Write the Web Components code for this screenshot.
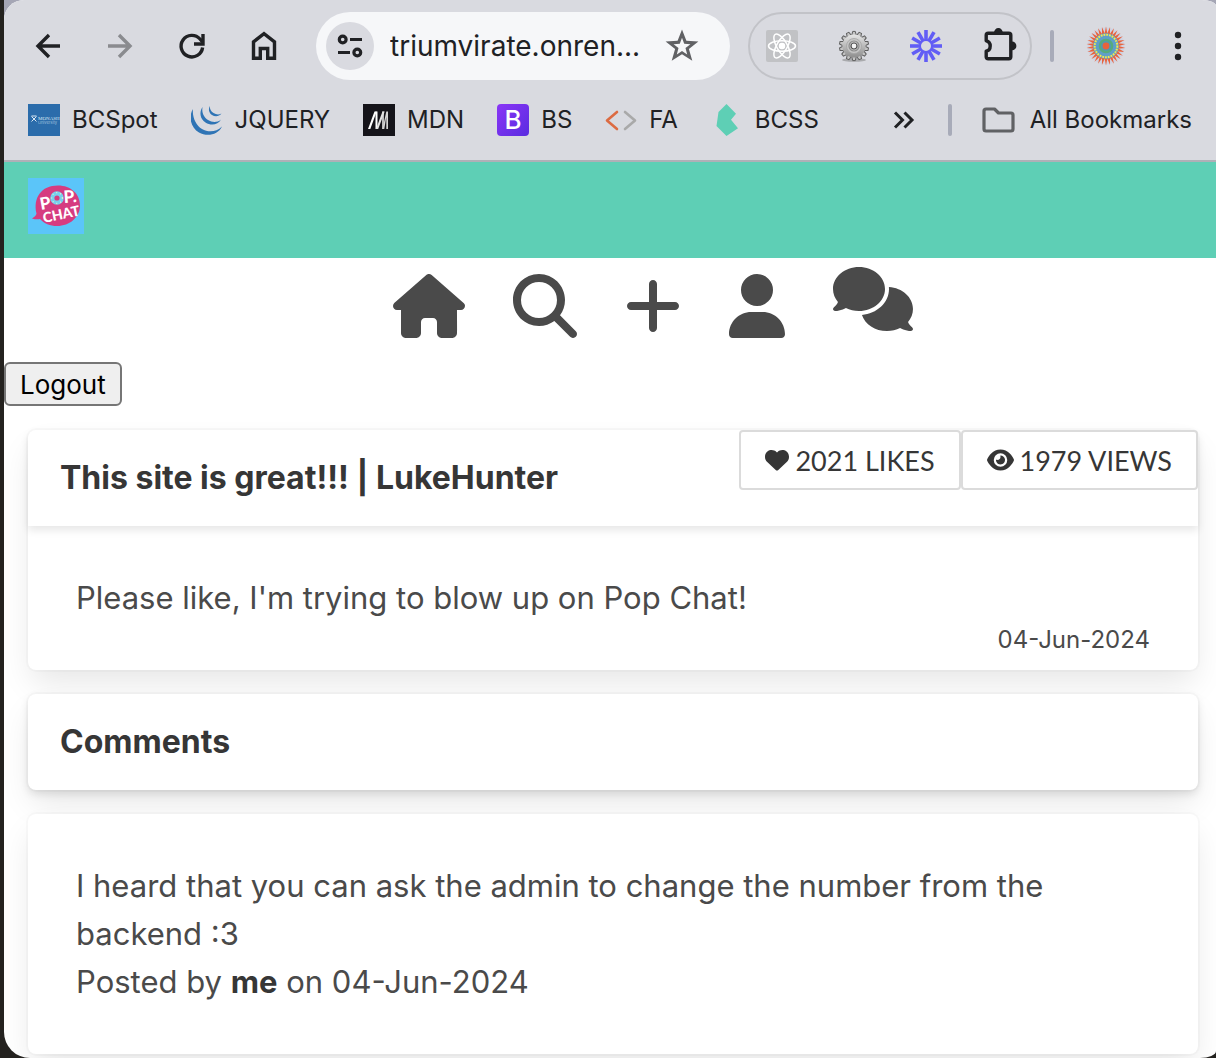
<!DOCTYPE html>
<html lang="en">
<head>
<meta charset="utf-8">
<title>Pop Chat</title>
<style>
  html, body { margin: 0; }
  body {
    background: linear-gradient(#a5a6b5 0 50%, #24221f 50%);
    font-family: Inter, "Liberation Sans", sans-serif;
    color: #4a4a4a;
    border-left: 4px solid #24221f;
    box-sizing: border-box;
    min-height: 100vh;
  }
</style>
</head>
<body>
<browser-window>
  <browser-toolbar slot="chrome"></browser-toolbar>
  <bookmark-bar slot="chrome"></bookmark-bar>
  <site-header></site-header>
  <site-nav></site-nav>
  <logout-button>Logout</logout-button>
  <card-list>
    <post-card likes="2021" views="1979">
      <span slot="title">This site is great!!! | LukeHunter</span>
      Please like, I'm trying to blow up on Pop Chat!
      <span slot="date">04-Jun-2024</span>
    </post-card>
    <heading-card>Comments</heading-card>
    <comment-card>
      I heard that you can ask the admin to change the number from the backend :3
      <span slot="author">me</span>
      <span slot="date">04-Jun-2024</span>
    </comment-card>
  </card-list>
</browser-window>

<script>
const define = (name, markup) => customElements.define(name, class extends HTMLElement {
  constructor() {
    super();
    const html = typeof markup === 'function' ? markup(this) : markup;
    this.attachShadow({ mode: 'open' }).innerHTML =
      '<style>*,:host{box-sizing:border-box}:host{display:block}svg{display:block;flex:none}button{font:inherit;color:inherit;cursor:pointer}</style>' + html;
  }
});

/* Solid glyphs shared by the navigation and the post statistics */
const GLYPHS = {
  home: [576, 'M575.8 255.5c0 18-15 32.1-32 32.1h-32l.7 160.2c0 2.7-.2 5.4-.5 8.1V472c0 22.1-17.9 40-40 40H456c-1.1 0-2.2 0-3.3-.1c-1.4 .1-2.8 .1-4.2 .1H416 392c-22.1 0-40-17.9-40-40V448 384c0-17.7-14.3-32-32-32H256c-17.7 0-32 14.3-32 32v64 24c0 22.1-17.9 40-40 40H160 128.1c-1.5 0-3-.1-4.5-.2c-1.2 .1-2.4 .2-3.6 .2H104c-22.1 0-40-17.9-40-40V360c0-.9 0-1.9 .1-2.8V287.6H32c-18 0-32-14-32-32.1c0-9 3-17 10-24L266.4 8c7-7 15-8 22-8s15 2 21 7L564.8 231.5c8 7 12 15 11 24z'],
  search: [512, 'M416 208c0 45.9-14.9 88.3-40 122.7L502.6 457.4c12.5 12.5 12.5 32.8 0 45.3s-32.8 12.5-45.3 0L330.7 376c-34.4 25.2-76.8 40-122.7 40C93.1 416 0 322.9 0 208S93.1 0 208 0S416 93.1 416 208zM208 352a144 144 0 1 0 0-288 144 144 0 1 0 0 288z'],
  plus: [448, 'M256 80c0-17.7-14.3-32-32-32s-32 14.3-32 32V224H48c-17.7 0-32 14.3-32 32s14.3 32 32 32H192V432c0 17.7 14.3 32 32 32s32-14.3 32-32V288H400c17.7 0 32-14.3 32-32s-14.3-32-32-32H256V80z'],
  user: [448, 'M224 256A128 128 0 1 0 224 0a128 128 0 1 0 0 256zm-45.7 48C79.8 304 0 383.8 0 482.3C0 498.7 13.3 512 29.7 512H418.3c16.4 0 29.7-13.3 29.7-29.7C448 383.8 368.2 304 269.7 304H178.3z'],
  comments: [640, 'M208 352c114.9 0 208-78.8 208-176S322.9 0 208 0S0 78.8 0 176c0 38.6 14.7 74.3 39.6 103.4c-3.5 9.4-8.7 17.7-14.2 24.7c-4.8 6.2-9.7 11-13.3 14.3c-1.8 1.6-3.3 2.9-4.3 3.7c-.5 .4-.9 .7-1.1 .8l-.2 .2C1 327.2-1.4 334.4 .8 340.9S9.1 352 16 352c21.8 0 43.8-5.6 62.1-12.5c9.2-3.5 17.8-7.4 25.2-11.4C134.1 343.3 169.8 352 208 352zM448 176c0 112.3-99.1 196.9-216.5 207C255.8 457.4 336.4 512 432 512c38.2 0 73.9-8.7 104.7-23.9c7.5 4 16 7.9 25.2 11.4c18.3 6.9 40.3 12.5 62.1 12.5c6.9 0 13.1-4.5 15.2-11.1c2.1-6.6-.2-13.8-5.8-17.9l-.2-.2c-.2-.2-.6-.4-1.1-.8c-1-.8-2.5-2-4.3-3.7c-3.6-3.3-8.5-8.1-13.3-14.3c-5.5-7-10.7-15.4-14.2-24.7c24.9-29 39.6-64.7 39.6-103.4c0-92.8-84.9-168.9-192.6-175.5c.4 5.1 .6 10.3 .6 15.5z'],
  heart: [512, 'M47.6 300.4L228.3 469.1c7.5 7 17.4 10.9 27.7 10.9s20.2-3.9 27.7-10.9L464.4 300.4c30.4-28.3 47.6-68 47.6-109.5v-5.8c0-69.9-50.5-129.5-119.4-141C347 36.5 300.6 51.4 268 84L256 96 244 84c-32.6-32.6-79-47.5-124.6-39.9C50.5 55.6 0 115.2 0 185.1v5.8c0 41.5 17.2 81.2 47.6 109.5z'],
  eye: [576, 'M288 32c-80.8 0-145.5 36.8-192.6 80.6C48.6 156 17.3 208 2.5 243.7c-3.3 7.9-3.3 16.7 0 24.6C17.3 304 48.6 356 95.4 399.4C142.5 443.2 207.2 480 288 480s145.5-36.8 192.6-80.6c46.8-43.5 78.1-95.4 93-131.1c3.3-7.9 3.3-16.7 0-24.6c-14.9-35.7-46.2-87.7-93-131.1C433.5 68.8 368.8 32 288 32zM144 256a144 144 0 1 1 288 0 144 144 0 1 1 -288 0zm144-64c0 35.3-28.7 64-64 64c-7.1 0-13.9-1.2-20.3-3.3c-5.5-1.8-11.9 1.6-11.7 7.4c.3 6.9 1.3 13.8 3.2 20.7c13.7 51.2 66.4 81.6 117.6 67.9s81.6-66.4 67.9-117.6c-11.1-41.5-47.8-69.4-88.6-71.1c-5.8-.2-9.2 6.1-7.4 11.7c2.1 6.4 3.3 13.2 3.3 20.3z']
};
define('solid-icon', el => {
  const [w, d] = GLYPHS[el.getAttribute('name')];
  return `<style>svg{height:var(--icon-size,64px);width:auto;fill:currentColor}</style><svg viewBox="0 0 ${w} 512" aria-hidden="true"><path d="${d}"/></svg>`;
});

define('browser-window', `
<style>
  :host{background:#fff;min-height:100vh;overflow:hidden;border-radius:20px 14px 16px 26px / 20px 6px 7px 26px}
  .chrome{background:#d9dae0;border-bottom:2px solid #b0b0b7;color:#202124}
</style>
<div class="chrome"><slot name="chrome"></slot></div>
<main><slot></slot></main>`);

const rays = (n, shape) => Array.from({ length: n }, (_, i) => `<g transform="rotate(${i * 360 / n})">${shape}</g>`).join('');

define('browser-toolbar', `
<style>
  :host{display:flex;align-items:center;padding:12px 34px 0 8px}
  button{border:0;background:none;padding:0;display:grid;place-items:center;height:48px}
  .nav{display:flex;margin-right:16px}
  .nav button{width:72px}
  .url{flex:1;min-width:0;height:68px;border-radius:34px;background:#f6f7f9;display:flex;align-items:center;padding:0 30px 0 10px}
  .site{width:48px;border-radius:50%;background:#d9dae0;flex:none}
  input{flex:1;min-width:0;border:0;background:none;outline:0;font:28px Inter,"Liberation Sans",sans-serif;color:#202124;padding:0;margin:0 12px 0 16px;height:48px}
  .ext{display:flex;gap:40px;height:68px;align-items:center;border:2px solid #c2c3c8;border-radius:34px;padding:0 16px;margin:0 18px}
  .ext button{width:32px}
  .sep{width:4px;height:32px;border-radius:2px;background:#a8abb9}
  .avatar{width:40px;margin:0 48px 0 32px}
  .more{width:8px}
</style>
<div class="nav">
  <button aria-label="Back"><svg width="32" height="32" fill="none" stroke="#202124" stroke-width="3.4"><path d="M28 16H6M17 5 6 16l11 11"/></svg></button>
  <button aria-label="Forward"><svg width="32" height="32" fill="none" stroke="#8a8b8f" stroke-width="3.4"><path d="M4 16h22M15 5l11 11-11 11"/></svg></button>
  <button aria-label="Reload"><svg width="32" height="32" fill="none" stroke="#202124" stroke-width="3.4"><path d="M26.6 17.5A10.800 10.800 0 1 1 24 9l2.500 3"/><path d="M27 4v10H18"/></svg></button>
  <button aria-label="Home"><svg width="32" height="32" fill="none" stroke="#202124" stroke-width="3.400"><path d="M5.500 28.300V11.800L16 3.700l10.500 8.100v16.500h-6.800V18.500h-7.400v9.800z"/></svg></button>
</div>
<div class="url">
  <button class="site" aria-label="Site information"><svg width="28" height="28" fill="none" stroke="#202124" stroke-width="3.200"><circle cx="6.700" cy="7.500" r="3.400"/><path d="M14 7.500h12M2 20.500h12"/><circle cx="21.300" cy="20.500" r="3.400"/></svg></button>
  <input aria-label="Address" value="triumvirate.onren..." readonly>
  <button aria-label="Bookmark this page"><svg width="36" height="36" viewBox="0 0 36 36"><path fill="#606164" fill-rule="evenodd" d="m18 1.500 4.400 11.300 12 .8-9.500 7.400 3.400 11.700L18 26.200 7.700 32.700 11.100 21 1.600 13.600l12-.8zM18 9.800l-2.200 5.900-6.200.5 4.900 3.900-1.700 6.300L18 22.900l5.200 3.500-1.700-6.300 4.900-3.900-6.200-.5z"/></svg></button>
</div>
<div class="ext">
  <button aria-label="React tools"><svg width="32" height="32"><rect width="32" height="32" rx="2" fill="#c1c2c5"/><g transform="translate(16 16)" fill="none" stroke="#fff" stroke-width="1.500"><ellipse rx="13.500" ry="5.200"/><ellipse rx="13.500" ry="5.200" transform="rotate(60)"/><ellipse rx="13.500" ry="5.200" transform="rotate(120)"/><circle r="2.500" fill="#fff"/></g></svg></button>
  <button aria-label="Settings extension"><svg width="32" height="32"><defs><linearGradient id="m" x2="0" y2="1"><stop stop-color="#e6e6e6"/><stop offset="1" stop-color="#8d8d8d"/></linearGradient></defs><ellipse cx="16" cy="30" rx="12" ry="1.800" fill="#a9aaad"/><g transform="translate(16 16)"><g fill="#c4c4c4" stroke="#5f5f5f" stroke-width="1">${rays(14, '<path d="M-2.200-11-1.300-14.600h2.600L2.200-11"/>')}</g><circle r="11.600" fill="url(#m)"/><circle r="7.500" fill="#c6c6c6" stroke="#a5a5a5" stroke-width=".8"/><circle r="5" fill="none" stroke="#8d8d8d" stroke-width="1.200"/><circle r="3" fill="#f4f4f4" stroke="#505050" stroke-width="1.200"/></g></svg></button>
  <button aria-label="Loom"><svg width="32" height="32"><g transform="translate(16 16)" stroke="#625df5" stroke-width="3.600">${rays(12, '<path d="M0-5V-16"/>')}<circle r="6" fill="#d9dae0" stroke-width="2"/></g></svg></button>
  <button aria-label="Extensions"><svg width="36" height="36" viewBox="0 0 36 36"><path d="M5.200 8.800q0-2 2-2h20.600q2 0 2 2v21.400q0 2-2 2H7.200q-2 0-2-2v-5.500q4-.8 4-5.200t-4-5.200z" fill="none" stroke="#202124" stroke-width="3.400" stroke-linejoin="round" transform="translate(-1 -1.500)"/><path d="M12 4.500a4.400 4.400 0 0 1 8.800 0zM30 13.500a4.400 4.400 0 0 1 0 8.800z" fill="#202124"/></svg></button>
</div>
<div class="sep"></div>
<button class="avatar" aria-label="Profile"><svg width="40" height="40"><g transform="translate(20 20)"><circle r="18.500" fill="#cfd3e2"/><g fill="#e8633c">${rays(30, '<path d="M-1.500-12 0-19.500 1.500-12z"/>')}</g><circle r="12.800" fill="#5f9fc9"/><circle r="11.300" fill="none" stroke="#f2e94e" stroke-width="2" stroke-dasharray="1.800 1"/><circle r="6.200" fill="#4f9bb0" stroke="#57ab7c" stroke-width="2.200"/><circle r="3.400" fill="#e8633c"/></g></svg></button>
<button class="more" aria-label="Menu"><svg width="8" height="30" fill="#202124"><circle cx="4" cy="4" r="3.200"/><circle cx="4" cy="15" r="3.200"/><circle cx="4" cy="26" r="3.200"/></svg></button>`);

define('bookmark-link', `
<style>
  a{display:flex;align-items:center;gap:12px;color:inherit;text-decoration:none;font-size:24px;line-height:32px;white-space:nowrap}
</style>
<a href="#"><slot name="icon"></slot><slot></slot></a>`);

define('bookmark-bar', `
<style>
  :host{display:flex;align-items:center;justify-content:space-between;padding:24px}
  .links,.end{display:flex;align-items:center}
  .links{gap:33px}
  .end{gap:30px}
  .end button{border:0;background:none;padding:0}
  .end bookmark-link svg{margin-right:2px}
  .sep{width:4px;height:32px;border-radius:2px;background:#a8abb9}
</style>
<div class="links">
  <bookmark-link><svg slot="icon" width="32" height="32"><rect width="32" height="32" fill="#2b6cab"/><g fill="none" stroke="#dbe8f3" stroke-width="1"><path d="M3.500 12.500l5 5M8.500 12.500l-5 5M3.500 12h5"/></g><text x="10" y="16" font-size="5" font-family="Liberation Serif" fill="#dbe8f3">MONASH</text><text x="10" y="20" font-size="4" fill="#9fc0dd">University</text></svg>BCSpot</bookmark-link>
  <bookmark-link><svg slot="icon" width="32" height="32" viewBox="1 0 32 32" fill="#2f74b5"><path d="M3 5C-2 13 1 24 9 28.500s19 2.500 23-6c-6 6-14 6-20 2.500S2 13 3 5z"/><path d="M12.500 3C9 8 10 15 15.500 18.500S28 21 31 15.500c-4 3.500-9 3-13 .5S11.500 9 12.500 3z"/><path d="M20 2c-2 3-1 7 2 9s7 1.800 9.500-1.500c-3 1.500-5.500 1-8-.5S19.500 5 20 2z"/></svg>JQUERY</bookmark-link>
  <bookmark-link><svg slot="icon" width="32" height="32"><rect width="32" height="32" fill="#15141a"/><g fill="#fff"><path d="M5 25 11.500 7.500h2.200L7.300 25z"/><path d="M12.500 7.500h2V25h-2z"/><path d="M13 25 19.500 7.500h2.200L15.200 25z" fill="#e4e4e4"/><path d="M19.200 7.500h1.600V25h-1.600z" fill="#e4e4e4"/><path d="M19.500 25 23.300 7.500h1.700V25h-1.700V13l-2 12z" fill="#d5d5d5"/></g></svg>MDN</bookmark-link>
  <bookmark-link><svg slot="icon" width="32" height="32"><defs><linearGradient id="b" x2="1" y2="1"><stop stop-color="#8a35f6"/><stop offset="1" stop-color="#5a2ce0"/></linearGradient></defs><rect width="32" height="32" rx="4" fill="url(#b)"/><text x="16" y="25" text-anchor="middle" font-size="26" font-weight="500" font-family="Inter" fill="#fff">B</text></svg>BS</bookmark-link>
  <bookmark-link><svg slot="icon" width="32" height="32" fill="none" stroke-width="2.600" stroke-linecap="round" stroke-linejoin="round"><path d="M12 8 2 16.500 12 25" stroke="#dc6b42"/><path d="M20 8l10 8.500L20 25" stroke="#a9a9a9"/></svg>FA</bookmark-link>
  <bookmark-link><svg slot="icon" width="32" height="32"><path d="M15.500 0 25 9.800l-5 6 7 8.500L15.500 32 5.500 22 7.500 8z" fill="#5ecfb5"/></svg>BCSS</bookmark-link>
</div>
<div class="end">
  <button aria-label="More bookmarks"><svg width="26" height="20" fill="none" stroke="#202124" stroke-width="3"><path d="m3 2.500 7.500 7.500L3 17.500M12.500 2.500 20 10l-7.500 7.500"/></svg></button>
  <div class="sep"></div>
  <bookmark-link><svg slot="icon" width="34" height="28"><path d="M4 3h8.500l4 4H29q2 0 2 2v14q0 2-2 2H4q-2 0-2-2V5q0-2 2-2z" fill="none" stroke="#606164" stroke-width="3.200" stroke-linejoin="round"/></svg>All Bookmarks</bookmark-link>
</div>`);

define('site-header', `
<style>
  :host{background:#5ecfb5;height:96px;padding:16px 24px}
  a{display:inline-block}
</style>
<a href="#" aria-label="Pop Chat home"><svg width="56" height="56">
  <rect width="56" height="56" fill="#5bc5f9"/>
  <path d="M30 7.500c13 0 22 8.500 22 20S42 48 29 48c-7 0-13-2.500-17-7-2 .6-5 .5-8-.5 2.500-1.500 4-3 4.500-5C5 20 13 7.500 30 7.500z" fill="#d63c80"/>
  <circle cx="29" cy="20" r="4.700" fill="none" stroke="#77d0ee" stroke-width="4.200"/>
  <circle cx="29" cy="20" r="5.400" fill="none" stroke="#e3f4c8" stroke-width="1.200" stroke-dasharray="1 3"/>
  <g fill="#fff" font-family="Lato" font-weight="900">
    <text font-size="17" transform="translate(13 32) rotate(-10)">P</text>
    <text font-size="17" transform="translate(36 25) rotate(-4)">P.</text>
    <text font-size="14" transform="translate(16 45) rotate(-12)">CHAT</text>
  </g>
</svg></a>`);

define('site-nav', `
<style>
  nav{display:flex;justify-content:center;gap:48px;padding:16px 0 24px 86px}
  a{color:#4a4a4a}
  .raised{margin-top:-7px}
</style>
<nav>
  <a href="#" aria-label="Home"><solid-icon name="home"></solid-icon></a>
  <a href="#" aria-label="Search"><solid-icon name="search"></solid-icon></a>
  <a href="#" aria-label="New post"><solid-icon name="plus"></solid-icon></a>
  <a href="#" aria-label="Profile"><solid-icon name="user"></solid-icon></a>
  <a href="#" aria-label="Messages" class="raised"><solid-icon name="comments"></solid-icon></a>
</nav>`);

define('logout-button', `
<style>
  button{display:block;height:44px;padding:0 14px;border:2px solid #767676;border-radius:6px;background:#efefef;color:#000;font-size:26px}
</style>
<button><slot></slot></button>`);

define('card-list', `
<style>
  :host{display:flex;flex-direction:column;gap:24px;padding:24px 18px 4px 24px}
</style><slot></slot>`);

const CARD = `<style>
  :host{position:relative;background:#fff;border-radius:8px;box-shadow:0 16px 32px -4px rgba(10,10,10,.1),0 0 0 2px rgba(10,10,10,.02);font-size:31px;line-height:48px}
  header{display:flex;justify-content:space-between;align-items:flex-start;border-radius:8px 8px 0 0;box-shadow:0 4px 8px rgba(10,10,10,.1)}
  h2{margin:0;padding:24px 32px;font-size:32px;line-height:48px;font-weight:700;color:#363636}
  p{margin:0}
  strong{color:#363636}
</style>`;

define('stat-button', el => `
<style>
  button{display:flex;align-items:center;gap:6px;height:60px;padding:0 24px;border:2px solid #dbdbdb;border-radius:4px;background:#fff;color:#363636;font:27px Lato,sans-serif;white-space:nowrap;--icon-size:24px}
</style>
<button><solid-icon name="${el.getAttribute('icon')}"></solid-icon><slot></slot></button>`);

define('post-card', el => CARD + `
<style>
  .stats{display:flex}
  .content{padding:48px 48px 12px}
  time{display:block;text-align:right;font-size:24px;line-height:36px}
</style>
<header>
  <h2><slot name="title"></slot></h2>
  <div class="stats">
    <stat-button icon="heart">${el.getAttribute('likes')} LIKES</stat-button>
    <stat-button icon="eye">${el.getAttribute('views')} VIEWS</stat-button>
  </div>
</header>
<div class="content"><p><slot></slot></p><time><slot name="date"></slot></time></div>`);

define('heading-card', CARD + `<style>header{border-radius:8px}</style><header><h2><slot></slot></h2></header>`);

define('comment-card', CARD + `
<style>.content{padding:48px}</style>
<div class="content">
  <p><slot></slot></p>
  <p>Posted by <strong><slot name="author"></slot></strong> on <slot name="date"></slot></p>
</div>`);
</script>
</body>
</html>
